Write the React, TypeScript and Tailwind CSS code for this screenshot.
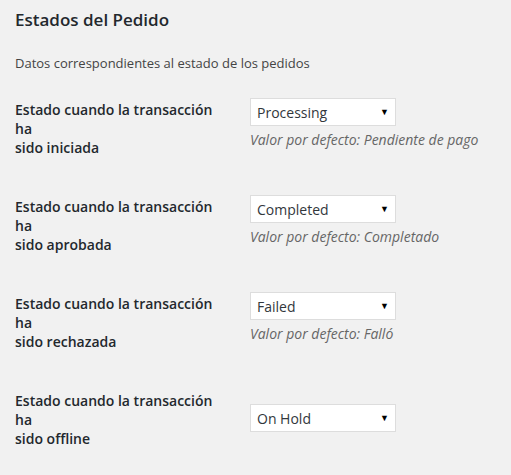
export default function App() {
  const rows = [
    { label: 'sido iniciada', value: 'Processing', help: 'Valor por defecto: Pendiente de pago' },
    { label: 'sido aprobada', value: 'Completed', help: 'Valor por defecto: Completado' },
    { label: 'sido rechazada', value: 'Failed', help: 'Valor por defecto: Falló' },
  ]

  return (
    <div className="min-h-[475px] w-[511px] bg-[#f1f1f1] pl-[15px] pt-[9px] font-['Open_Sans',sans-serif] text-[#23282d]">
      {/* Header */}
      <h2 className="text-[17px] font-semibold leading-[22px]">Estados del Pedido</h2>
      <p className="mt-[23px] text-[13px] leading-[19px] text-[#444]">
        Datos correspondientes al estado de los pedidos
      </p>

      {/* Rows */}
      <div className="mt-[25px]">
        {rows.map((row) => (
          <div key={row.value} className="flex h-[97px] items-start">
            <div className="w-[235px] pt-[2px] text-[14px] font-semibold leading-[19px]">
              <div>Estado cuando la transacción</div>
              <div>ha</div>
              <div>{row.label}</div>
            </div>
            <div>
              <Select value={row.value} />
              <div className="mt-[4px] text-[14px] italic leading-[19px] text-[#666]">{row.help}</div>
            </div>
          </div>
        ))}

        <div className="flex items-start">
          <div className="w-[235px] pt-[2px] text-[14px] font-semibold leading-[19px]">
            <div>Estado cuando la transacción</div>
            <div>ha</div>
            <div>sido offline</div>
          </div>
          <div className="pt-[15px]">
            <Select value="On Hold" />
          </div>
        </div>
      </div>
    </div>
  )
}

function Select({ value }: { value: string }) {
  return (
    <div className="flex h-[28px] w-[146px] items-center justify-between border border-[#dddddd] bg-white pl-[6px] pr-[6px] text-[14px] text-[#32373c]">
      <span>{value}</span>
      <span className="text-[9px] text-black">▼</span>
    </div>
  )
}
